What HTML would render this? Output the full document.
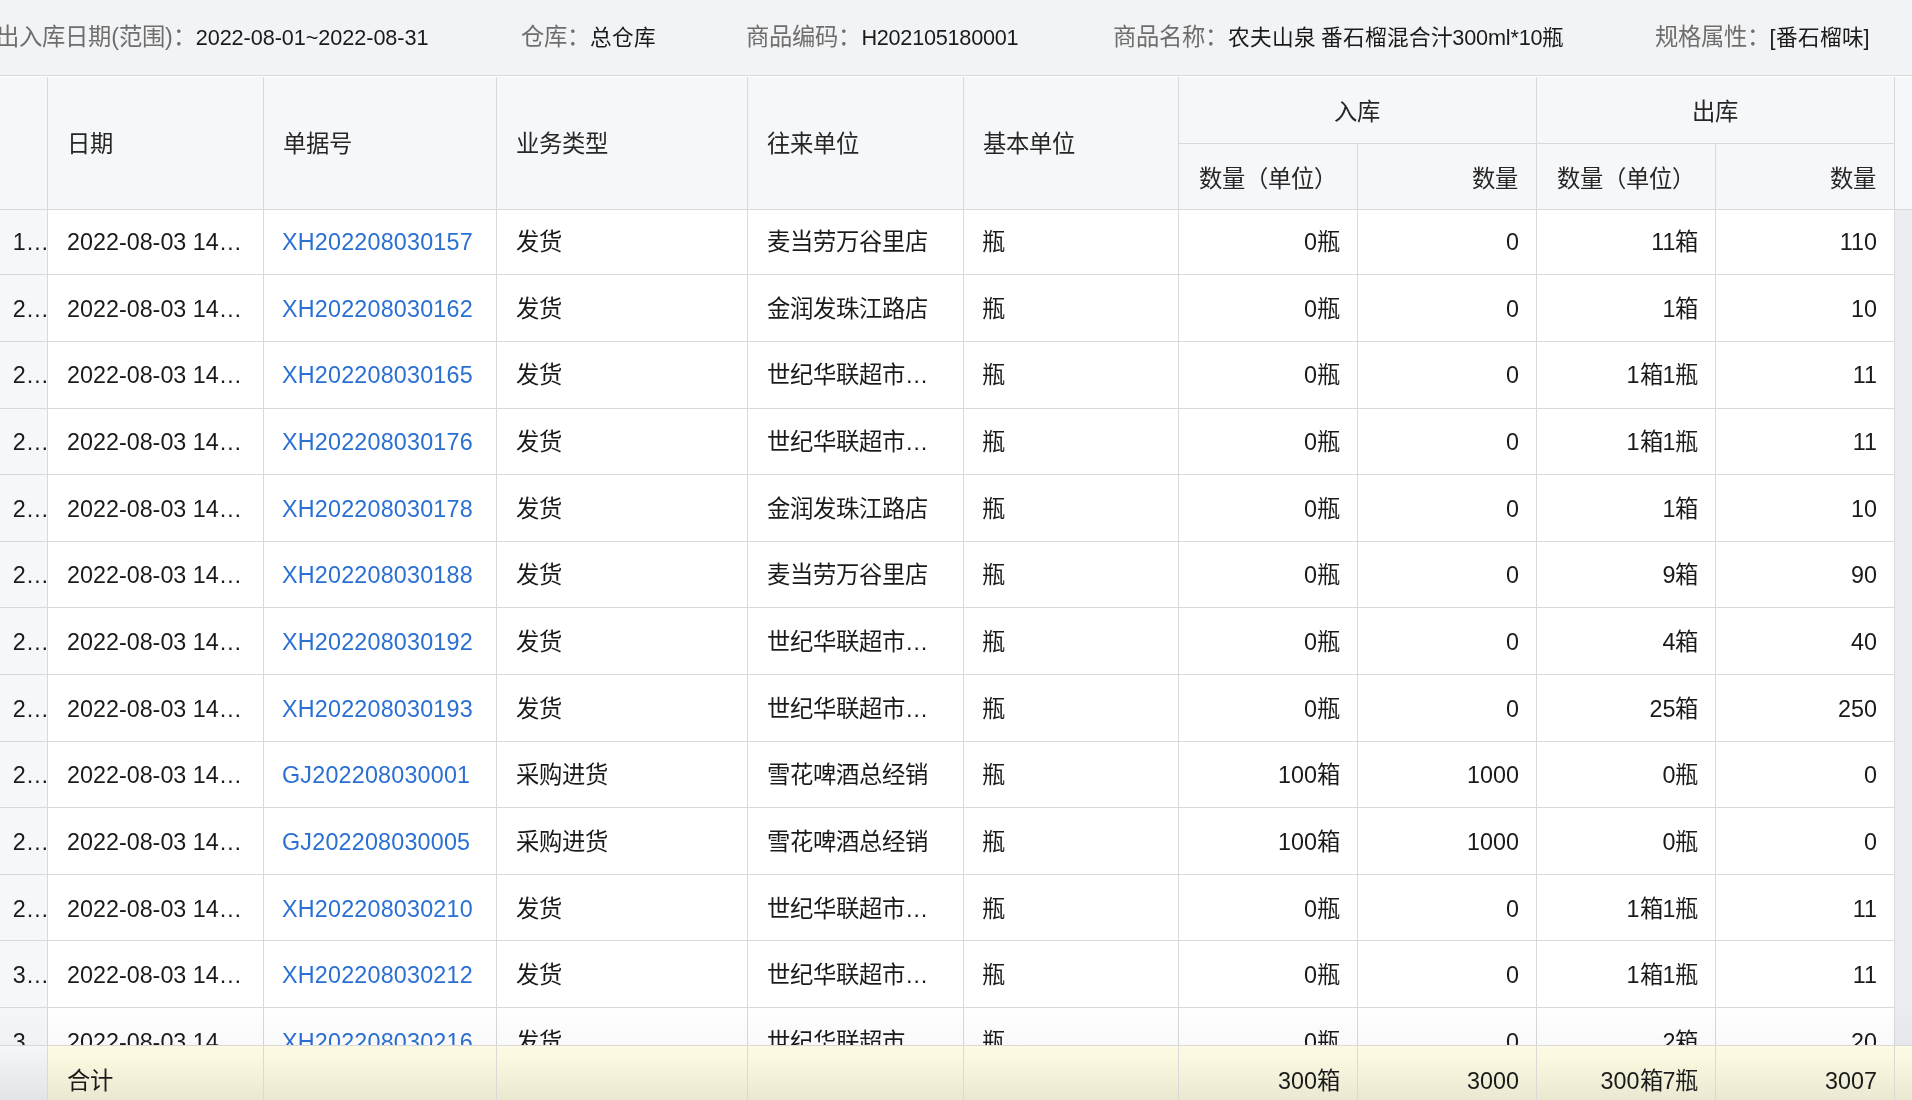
<!DOCTYPE html>
<html lang="zh-CN"><head><meta charset="utf-8"><title>出入库明细</title>
<style>
html,body{margin:0;padding:0;}
body{will-change:transform;width:1912px;height:1100px;overflow:hidden;position:relative;background:#fff;font-family:"Liberation Sans",sans-serif;font-size:23.33px;line-height:1;}
.bg{position:absolute;}
.t{position:absolute;white-space:nowrap;line-height:23.33px;}
.clip{position:absolute;left:0;top:0;width:1912px;height:1045px;overflow:hidden;}
.shade{position:absolute;left:0;top:1005px;width:1912px;height:40px;background:linear-gradient(rgba(0,0,0,0),rgba(0,0,0,0.025));}
</style></head><body>
<div class="bg" style="left:0px;top:0px;width:1912px;height:75px;background:#f2f3f5;"></div><div class="bg" style="left:0px;top:75px;width:1912px;height:1px;background:#d8d8d8;"></div><div class="bg" style="left:0px;top:76px;width:1912px;height:1px;background:#ffffff;"></div><div class="t " style="top:25.75px;right:1716.30px;color:#6e6e6e;">出入库日期(范围)：</div><div class="t " style="top:26.66px;left:195.70px;color:#1a1a1a;font-size:21.67px;line-height:21.67px;letter-spacing:-0.07px;">2022-08-01~2022-08-31</div><div class="t " style="top:25.75px;right:1322.00px;color:#6e6e6e;">仓库：</div><div class="t " style="top:26.66px;left:590.00px;color:#1a1a1a;font-size:21.67px;line-height:21.67px;letter-spacing:0px;">总仓库</div><div class="t " style="top:25.75px;right:1050.60px;color:#6e6e6e;">商品编码：</div><div class="t " style="top:26.66px;left:861.40px;color:#1a1a1a;font-size:21.67px;line-height:21.67px;letter-spacing:-0.25px;">H202105180001</div><div class="t " style="top:25.75px;right:683.80px;color:#6e6e6e;">商品名称：</div><div class="t " style="top:26.66px;left:1228.20px;color:#1a1a1a;font-size:21.67px;line-height:21.67px;letter-spacing:-0.17px;">农夫山泉 番石榴混合汁300ml*10瓶</div><div class="t " style="top:25.75px;right:142.50px;color:#6e6e6e;">规格属性：</div><div class="t " style="top:26.66px;left:1769.50px;color:#1a1a1a;font-size:21.67px;line-height:21.67px;letter-spacing:0px;">[番石榴味]</div><div class="bg" style="left:0px;top:77px;width:1912px;height:132px;background:#f6f7f9;"></div><div class="bg" style="left:0px;top:209px;width:1912px;height:1px;background:#d9d9d9;"></div><div class="bg" style="left:1178px;top:143px;width:716px;height:1px;background:#d9d9d9;"></div><div class="bg" style="left:47px;top:77px;width:1px;height:132px;background:#d9d9d9;"></div><div class="bg" style="left:263px;top:77px;width:1px;height:132px;background:#d9d9d9;"></div><div class="bg" style="left:496px;top:77px;width:1px;height:132px;background:#d9d9d9;"></div><div class="bg" style="left:747px;top:77px;width:1px;height:132px;background:#d9d9d9;"></div><div class="bg" style="left:963px;top:77px;width:1px;height:132px;background:#d9d9d9;"></div><div class="bg" style="left:1178px;top:77px;width:1px;height:132px;background:#d9d9d9;"></div><div class="bg" style="left:1357px;top:143px;width:1px;height:66px;background:#d9d9d9;"></div><div class="bg" style="left:1536px;top:77px;width:1px;height:132px;background:#d9d9d9;"></div><div class="bg" style="left:1715px;top:143px;width:1px;height:66px;background:#d9d9d9;"></div><div class="bg" style="left:1894px;top:77px;width:1px;height:132px;background:#d9d9d9;"></div><div class="t " style="top:133.45px;left:67.00px;color:#262626;">日期</div><div class="t " style="top:133.45px;left:283.00px;color:#262626;">单据号</div><div class="t " style="top:133.45px;left:516.00px;color:#262626;">业务类型</div><div class="t " style="top:133.45px;left:767.00px;color:#262626;">往来单位</div><div class="t " style="top:133.45px;left:983.00px;color:#262626;">基本单位</div><div class="t" style="left:1178px;width:358px;text-align:center;top:100.75px;color:#262626">入库</div><div class="t" style="left:1536px;width:358px;text-align:center;top:100.75px;color:#262626">出库</div><div class="t " style="top:167.75px;left:1199.00px;color:#262626;">数量（单位）</div><div class="t " style="top:167.75px;right:394.00px;color:#262626;">数量</div><div class="t " style="top:167.75px;left:1557.00px;color:#262626;">数量（单位）</div><div class="t " style="top:167.75px;right:36.00px;color:#262626;">数量</div>
<div class="clip"><div class="bg" style="left:47px;top:210px;width:1847px;height:835px;background:#ffffff;"></div><div class="bg" style="left:0px;top:210px;width:47px;height:835px;background:#f6f7f9;"></div><div class="bg" style="left:1895px;top:210px;width:17px;height:835px;background:#ecedf0;"></div><div class="bg" style="left:0px;top:274px;width:1894px;height:1px;background:#d9d9d9;"></div><div class="bg" style="left:0px;top:341px;width:1894px;height:1px;background:#d9d9d9;"></div><div class="bg" style="left:0px;top:408px;width:1894px;height:1px;background:#d9d9d9;"></div><div class="bg" style="left:0px;top:474px;width:1894px;height:1px;background:#d9d9d9;"></div><div class="bg" style="left:0px;top:541px;width:1894px;height:1px;background:#d9d9d9;"></div><div class="bg" style="left:0px;top:607px;width:1894px;height:1px;background:#d9d9d9;"></div><div class="bg" style="left:0px;top:674px;width:1894px;height:1px;background:#d9d9d9;"></div><div class="bg" style="left:0px;top:741px;width:1894px;height:1px;background:#d9d9d9;"></div><div class="bg" style="left:0px;top:807px;width:1894px;height:1px;background:#d9d9d9;"></div><div class="bg" style="left:0px;top:874px;width:1894px;height:1px;background:#d9d9d9;"></div><div class="bg" style="left:0px;top:940px;width:1894px;height:1px;background:#d9d9d9;"></div><div class="bg" style="left:0px;top:1007px;width:1894px;height:1px;background:#d9d9d9;"></div><div class="bg" style="left:47px;top:210px;width:1px;height:835px;background:#d9d9d9;"></div><div class="bg" style="left:263px;top:210px;width:1px;height:835px;background:#d9d9d9;"></div><div class="bg" style="left:496px;top:210px;width:1px;height:835px;background:#d9d9d9;"></div><div class="bg" style="left:747px;top:210px;width:1px;height:835px;background:#d9d9d9;"></div><div class="bg" style="left:963px;top:210px;width:1px;height:835px;background:#d9d9d9;"></div><div class="bg" style="left:1178px;top:210px;width:1px;height:835px;background:#d9d9d9;"></div><div class="bg" style="left:1357px;top:210px;width:1px;height:835px;background:#d9d9d9;"></div><div class="bg" style="left:1536px;top:210px;width:1px;height:835px;background:#d9d9d9;"></div><div class="bg" style="left:1715px;top:210px;width:1px;height:835px;background:#d9d9d9;"></div><div class="bg" style="left:1894px;top:210px;width:1px;height:835px;background:#d9d9d9;"></div><div class="t " style="top:231.05px;right:1863.00px;color:#1a1a1a;">1…</div><div class="t " style="top:231.05px;left:67.00px;color:#1a1a1a;">2022-08-03 14…</div><div class="t " style="top:231.05px;left:282.00px;color:#2a6fd2;letter-spacing:0.2px;">XH202208030157</div><div class="t " style="top:231.05px;left:516.00px;color:#1a1a1a;">发货</div><div class="t " style="top:231.05px;left:767.00px;color:#1a1a1a;">麦当劳万谷里店</div><div class="t " style="top:231.05px;left:981.50px;color:#1a1a1a;">瓶</div><div class="t " style="top:231.05px;right:572.00px;color:#1a1a1a;">0瓶</div><div class="t " style="top:231.05px;right:393.00px;color:#1a1a1a;">0</div><div class="t " style="top:231.05px;right:213.50px;color:#1a1a1a;">11箱</div><div class="t " style="top:231.05px;right:35.00px;color:#1a1a1a;">110</div><div class="t " style="top:297.72px;right:1863.00px;color:#1a1a1a;">2…</div><div class="t " style="top:297.72px;left:67.00px;color:#1a1a1a;">2022-08-03 14…</div><div class="t " style="top:297.72px;left:282.00px;color:#2a6fd2;letter-spacing:0.2px;">XH202208030162</div><div class="t " style="top:297.72px;left:516.00px;color:#1a1a1a;">发货</div><div class="t " style="top:297.72px;left:767.00px;color:#1a1a1a;">金润发珠江路店</div><div class="t " style="top:297.72px;left:981.50px;color:#1a1a1a;">瓶</div><div class="t " style="top:297.72px;right:572.00px;color:#1a1a1a;">0瓶</div><div class="t " style="top:297.72px;right:393.00px;color:#1a1a1a;">0</div><div class="t " style="top:297.72px;right:213.50px;color:#1a1a1a;">1箱</div><div class="t " style="top:297.72px;right:35.00px;color:#1a1a1a;">10</div><div class="t " style="top:364.38px;right:1863.00px;color:#1a1a1a;">2…</div><div class="t " style="top:364.38px;left:67.00px;color:#1a1a1a;">2022-08-03 14…</div><div class="t " style="top:364.38px;left:282.00px;color:#2a6fd2;letter-spacing:0.2px;">XH202208030165</div><div class="t " style="top:364.38px;left:516.00px;color:#1a1a1a;">发货</div><div class="t " style="top:364.38px;left:767.00px;color:#1a1a1a;">世纪华联超市…</div><div class="t " style="top:364.38px;left:981.50px;color:#1a1a1a;">瓶</div><div class="t " style="top:364.38px;right:572.00px;color:#1a1a1a;">0瓶</div><div class="t " style="top:364.38px;right:393.00px;color:#1a1a1a;">0</div><div class="t " style="top:364.38px;right:213.50px;color:#1a1a1a;">1箱1瓶</div><div class="t " style="top:364.38px;right:35.00px;color:#1a1a1a;">11</div><div class="t " style="top:431.05px;right:1863.00px;color:#1a1a1a;">2…</div><div class="t " style="top:431.05px;left:67.00px;color:#1a1a1a;">2022-08-03 14…</div><div class="t " style="top:431.05px;left:282.00px;color:#2a6fd2;letter-spacing:0.2px;">XH202208030176</div><div class="t " style="top:431.05px;left:516.00px;color:#1a1a1a;">发货</div><div class="t " style="top:431.05px;left:767.00px;color:#1a1a1a;">世纪华联超市…</div><div class="t " style="top:431.05px;left:981.50px;color:#1a1a1a;">瓶</div><div class="t " style="top:431.05px;right:572.00px;color:#1a1a1a;">0瓶</div><div class="t " style="top:431.05px;right:393.00px;color:#1a1a1a;">0</div><div class="t " style="top:431.05px;right:213.50px;color:#1a1a1a;">1箱1瓶</div><div class="t " style="top:431.05px;right:35.00px;color:#1a1a1a;">11</div><div class="t " style="top:497.72px;right:1863.00px;color:#1a1a1a;">2…</div><div class="t " style="top:497.72px;left:67.00px;color:#1a1a1a;">2022-08-03 14…</div><div class="t " style="top:497.72px;left:282.00px;color:#2a6fd2;letter-spacing:0.2px;">XH202208030178</div><div class="t " style="top:497.72px;left:516.00px;color:#1a1a1a;">发货</div><div class="t " style="top:497.72px;left:767.00px;color:#1a1a1a;">金润发珠江路店</div><div class="t " style="top:497.72px;left:981.50px;color:#1a1a1a;">瓶</div><div class="t " style="top:497.72px;right:572.00px;color:#1a1a1a;">0瓶</div><div class="t " style="top:497.72px;right:393.00px;color:#1a1a1a;">0</div><div class="t " style="top:497.72px;right:213.50px;color:#1a1a1a;">1箱</div><div class="t " style="top:497.72px;right:35.00px;color:#1a1a1a;">10</div><div class="t " style="top:564.38px;right:1863.00px;color:#1a1a1a;">2…</div><div class="t " style="top:564.38px;left:67.00px;color:#1a1a1a;">2022-08-03 14…</div><div class="t " style="top:564.38px;left:282.00px;color:#2a6fd2;letter-spacing:0.2px;">XH202208030188</div><div class="t " style="top:564.38px;left:516.00px;color:#1a1a1a;">发货</div><div class="t " style="top:564.38px;left:767.00px;color:#1a1a1a;">麦当劳万谷里店</div><div class="t " style="top:564.38px;left:981.50px;color:#1a1a1a;">瓶</div><div class="t " style="top:564.38px;right:572.00px;color:#1a1a1a;">0瓶</div><div class="t " style="top:564.38px;right:393.00px;color:#1a1a1a;">0</div><div class="t " style="top:564.38px;right:213.50px;color:#1a1a1a;">9箱</div><div class="t " style="top:564.38px;right:35.00px;color:#1a1a1a;">90</div><div class="t " style="top:631.05px;right:1863.00px;color:#1a1a1a;">2…</div><div class="t " style="top:631.05px;left:67.00px;color:#1a1a1a;">2022-08-03 14…</div><div class="t " style="top:631.05px;left:282.00px;color:#2a6fd2;letter-spacing:0.2px;">XH202208030192</div><div class="t " style="top:631.05px;left:516.00px;color:#1a1a1a;">发货</div><div class="t " style="top:631.05px;left:767.00px;color:#1a1a1a;">世纪华联超市…</div><div class="t " style="top:631.05px;left:981.50px;color:#1a1a1a;">瓶</div><div class="t " style="top:631.05px;right:572.00px;color:#1a1a1a;">0瓶</div><div class="t " style="top:631.05px;right:393.00px;color:#1a1a1a;">0</div><div class="t " style="top:631.05px;right:213.50px;color:#1a1a1a;">4箱</div><div class="t " style="top:631.05px;right:35.00px;color:#1a1a1a;">40</div><div class="t " style="top:697.72px;right:1863.00px;color:#1a1a1a;">2…</div><div class="t " style="top:697.72px;left:67.00px;color:#1a1a1a;">2022-08-03 14…</div><div class="t " style="top:697.72px;left:282.00px;color:#2a6fd2;letter-spacing:0.2px;">XH202208030193</div><div class="t " style="top:697.72px;left:516.00px;color:#1a1a1a;">发货</div><div class="t " style="top:697.72px;left:767.00px;color:#1a1a1a;">世纪华联超市…</div><div class="t " style="top:697.72px;left:981.50px;color:#1a1a1a;">瓶</div><div class="t " style="top:697.72px;right:572.00px;color:#1a1a1a;">0瓶</div><div class="t " style="top:697.72px;right:393.00px;color:#1a1a1a;">0</div><div class="t " style="top:697.72px;right:213.50px;color:#1a1a1a;">25箱</div><div class="t " style="top:697.72px;right:35.00px;color:#1a1a1a;">250</div><div class="t " style="top:764.39px;right:1863.00px;color:#1a1a1a;">2…</div><div class="t " style="top:764.39px;left:67.00px;color:#1a1a1a;">2022-08-03 14…</div><div class="t " style="top:764.39px;left:282.00px;color:#2a6fd2;letter-spacing:0.2px;">GJ202208030001</div><div class="t " style="top:764.39px;left:516.00px;color:#1a1a1a;">采购进货</div><div class="t " style="top:764.39px;left:767.00px;color:#1a1a1a;">雪花啤酒总经销</div><div class="t " style="top:764.39px;left:981.50px;color:#1a1a1a;">瓶</div><div class="t " style="top:764.39px;right:572.00px;color:#1a1a1a;">100箱</div><div class="t " style="top:764.39px;right:393.00px;color:#1a1a1a;">1000</div><div class="t " style="top:764.39px;right:213.50px;color:#1a1a1a;">0瓶</div><div class="t " style="top:764.39px;right:35.00px;color:#1a1a1a;">0</div><div class="t " style="top:831.05px;right:1863.00px;color:#1a1a1a;">2…</div><div class="t " style="top:831.05px;left:67.00px;color:#1a1a1a;">2022-08-03 14…</div><div class="t " style="top:831.05px;left:282.00px;color:#2a6fd2;letter-spacing:0.2px;">GJ202208030005</div><div class="t " style="top:831.05px;left:516.00px;color:#1a1a1a;">采购进货</div><div class="t " style="top:831.05px;left:767.00px;color:#1a1a1a;">雪花啤酒总经销</div><div class="t " style="top:831.05px;left:981.50px;color:#1a1a1a;">瓶</div><div class="t " style="top:831.05px;right:572.00px;color:#1a1a1a;">100箱</div><div class="t " style="top:831.05px;right:393.00px;color:#1a1a1a;">1000</div><div class="t " style="top:831.05px;right:213.50px;color:#1a1a1a;">0瓶</div><div class="t " style="top:831.05px;right:35.00px;color:#1a1a1a;">0</div><div class="t " style="top:897.72px;right:1863.00px;color:#1a1a1a;">2…</div><div class="t " style="top:897.72px;left:67.00px;color:#1a1a1a;">2022-08-03 14…</div><div class="t " style="top:897.72px;left:282.00px;color:#2a6fd2;letter-spacing:0.2px;">XH202208030210</div><div class="t " style="top:897.72px;left:516.00px;color:#1a1a1a;">发货</div><div class="t " style="top:897.72px;left:767.00px;color:#1a1a1a;">世纪华联超市…</div><div class="t " style="top:897.72px;left:981.50px;color:#1a1a1a;">瓶</div><div class="t " style="top:897.72px;right:572.00px;color:#1a1a1a;">0瓶</div><div class="t " style="top:897.72px;right:393.00px;color:#1a1a1a;">0</div><div class="t " style="top:897.72px;right:213.50px;color:#1a1a1a;">1箱1瓶</div><div class="t " style="top:897.72px;right:35.00px;color:#1a1a1a;">11</div><div class="t " style="top:964.39px;right:1863.00px;color:#1a1a1a;">3…</div><div class="t " style="top:964.39px;left:67.00px;color:#1a1a1a;">2022-08-03 14…</div><div class="t " style="top:964.39px;left:282.00px;color:#2a6fd2;letter-spacing:0.2px;">XH202208030212</div><div class="t " style="top:964.39px;left:516.00px;color:#1a1a1a;">发货</div><div class="t " style="top:964.39px;left:767.00px;color:#1a1a1a;">世纪华联超市…</div><div class="t " style="top:964.39px;left:981.50px;color:#1a1a1a;">瓶</div><div class="t " style="top:964.39px;right:572.00px;color:#1a1a1a;">0瓶</div><div class="t " style="top:964.39px;right:393.00px;color:#1a1a1a;">0</div><div class="t " style="top:964.39px;right:213.50px;color:#1a1a1a;">1箱1瓶</div><div class="t " style="top:964.39px;right:35.00px;color:#1a1a1a;">11</div><div class="t " style="top:1031.05px;right:1863.00px;color:#1a1a1a;">3…</div><div class="t " style="top:1031.05px;left:67.00px;color:#1a1a1a;">2022-08-03 14…</div><div class="t " style="top:1031.05px;left:282.00px;color:#2a6fd2;letter-spacing:0.2px;">XH202208030216</div><div class="t " style="top:1031.05px;left:516.00px;color:#1a1a1a;">发货</div><div class="t " style="top:1031.05px;left:767.00px;color:#1a1a1a;">世纪华联超市…</div><div class="t " style="top:1031.05px;left:981.50px;color:#1a1a1a;">瓶</div><div class="t " style="top:1031.05px;right:572.00px;color:#1a1a1a;">0瓶</div><div class="t " style="top:1031.05px;right:393.00px;color:#1a1a1a;">0</div><div class="t " style="top:1031.05px;right:213.50px;color:#1a1a1a;">2箱</div><div class="t " style="top:1031.05px;right:35.00px;color:#1a1a1a;">20</div></div>
<div class="shade"></div>
<div class="bg" style="left:0px;top:1045px;width:1912px;height:1px;background:#d9d9d9;"></div><div class="bg" style="left:48px;top:1046px;width:1864px;height:54px;background:linear-gradient(#fcfae3,#fbf8e0 20%,#ebe8d2);"></div><div class="bg" style="left:0px;top:1046px;width:47px;height:54px;background:linear-gradient(#f5f6f8,#f1f2f4 20%,#e3e4e7);"></div><div class="bg" style="left:47px;top:1046px;width:1px;height:54px;background:#d9d9d9;"></div><div class="bg" style="left:263px;top:1046px;width:1px;height:54px;background:#d9d9d9;"></div><div class="bg" style="left:496px;top:1046px;width:1px;height:54px;background:#d9d9d9;"></div><div class="bg" style="left:747px;top:1046px;width:1px;height:54px;background:#d9d9d9;"></div><div class="bg" style="left:963px;top:1046px;width:1px;height:54px;background:#d9d9d9;"></div><div class="bg" style="left:1178px;top:1046px;width:1px;height:54px;background:#d9d9d9;"></div><div class="bg" style="left:1357px;top:1046px;width:1px;height:54px;background:#d9d9d9;"></div><div class="bg" style="left:1536px;top:1046px;width:1px;height:54px;background:#d9d9d9;"></div><div class="bg" style="left:1715px;top:1046px;width:1px;height:54px;background:#d9d9d9;"></div><div class="bg" style="left:1894px;top:1046px;width:1px;height:54px;background:#d9d9d9;"></div><div class="t " style="top:1069.75px;left:67.00px;color:#1a1a1a;">合计</div><div class="t " style="top:1069.75px;right:572.00px;color:#1a1a1a;">300箱</div><div class="t " style="top:1069.75px;right:393.00px;color:#1a1a1a;">3000</div><div class="t " style="top:1069.75px;right:213.50px;color:#1a1a1a;">300箱7瓶</div><div class="t " style="top:1069.75px;right:35.00px;color:#1a1a1a;">3007</div>
</body></html>
